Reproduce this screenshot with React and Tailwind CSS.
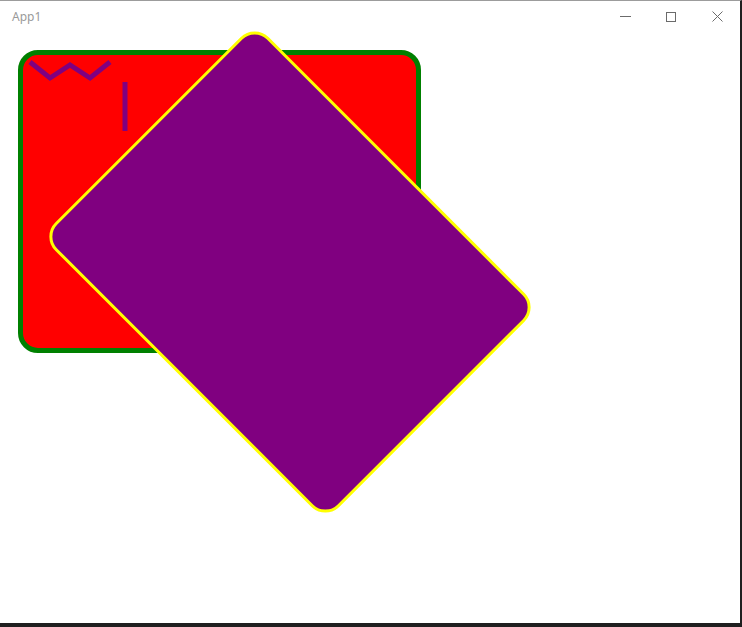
export default function App() {
  return (
    <div
      className="w-[742px] h-[627px] bg-white flex flex-col border-t border-t-[#9c9c9c] border-r-2 border-r-[#1f1f1f] border-b-4 border-b-[#1f1f1f] overflow-hidden"
      style={{ fontFamily: '"Noto Sans", "Liberation Sans", sans-serif' }}
    >
      {/* title bar */}
      <div className="h-[31px] flex items-center justify-between shrink-0">
        <span className="pl-3 text-[12px] text-[#9a9a9a]">App1</span>
        <div className="flex h-full">
          <button className="w-[46px] h-full flex items-center justify-center">
            <span className="block w-[11px] h-px bg-[#6b6b6b]" />
          </button>
          <button className="w-[46px] h-full flex items-center justify-center">
            <span className="block w-[10px] h-[10px] border border-[#6b6b6b]" />
          </button>
          <button className="w-[46px] h-full flex items-center justify-center">
            <svg width="11" height="11" viewBox="0 0 11 11">
              <path d="M0.5 0.5 L10.5 10.5 M10.5 0.5 L0.5 10.5" stroke="#6b6b6b" strokeWidth="1" />
            </svg>
          </button>
        </div>
      </div>

      {/* canvas */}
      <div className="relative flex-1">
        <div className="absolute left-[18px] top-[18px] w-[403px] h-[303px] bg-[#ff0000] border-[5px] border-[#008000] rounded-[20px]" />
        <svg className="absolute left-0 top-0" width="200" height="120">
          <polyline
            points="30,30 50,46 70,33 90,46 110,30"
            fill="none"
            stroke="#800080"
            strokeWidth="5"
          />
          <line x1="125" y1="50" x2="125" y2="99" stroke="#800080" strokeWidth="5" />
        </svg>
        <div className="absolute left-[89px] top-[89px] w-[402px] h-[302px] bg-[#800080] border-[3px] border-[#ffff00] rounded-[20px] rotate-45" />
      </div>
    </div>
  );
}
